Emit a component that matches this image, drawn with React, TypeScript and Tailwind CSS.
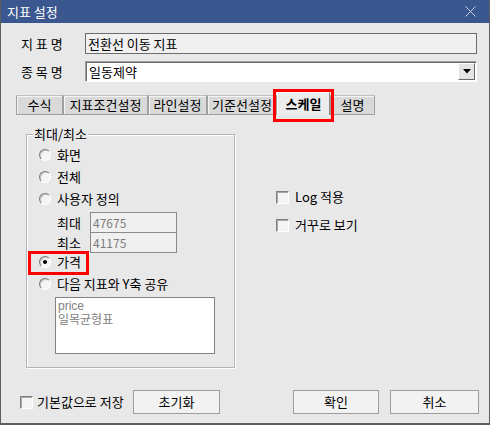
import React from 'react'

const font = { fontFamily: '"Noto Sans CJK KR", "Noto Sans", sans-serif' }

function Radio({ checked = false }: { checked?: boolean }) {
  return (
    <span className="flex h-[12px] w-[12px] shrink-0 items-center justify-center rounded-full border border-b-white border-l-[#7a7a7a] border-r-white border-t-[#7a7a7a] bg-[#f4f4f4] shadow-[inset_1px_1px_0_#c8c8c8]">
      {checked && <span className="h-[4px] w-[4px] rounded-full bg-black" />}
    </span>
  )
}

function Check() {
  return (
    <span className="h-[13px] w-[13px] shrink-0 border border-b-white border-l-[#808080] border-r-white border-t-[#808080] bg-[#f4f4f4] shadow-[inset_1px_1px_0_#a8a8a8]" />
  )
}

function Button({ label, w }: { label: string; w: string }) {
  return (
    <div className={`flex h-[24px] items-center justify-center border border-[#9c9c9c] bg-[#f2f2f2] text-black ${w}`}>
      {label}
    </div>
  )
}

const tabs = [
  { name: '수식', w: 'w-[47px]' },
  { name: '지표조건설정', w: 'w-[85px]' },
  { name: '라인설정', w: 'w-[59px]' },
  { name: '기준선설정', w: 'w-[70px]' },
  { name: '스케일', w: 'w-[53px]', active: true },
  { name: '설명', w: 'w-[45px]' },
]

export default function App() {
  return (
    <div className="h-[425px] w-[490px] overflow-hidden bg-white" style={font}>
      <div className="flex h-[425px] w-[490px] flex-col border-x border-b-2 border-[#5e5e5e] bg-[#e8e8e8] text-[13px] leading-[16px] text-black">
        <div className="flex h-[23px] shrink-0 items-center justify-between bg-[#3b5790] pl-[6px] pr-[13px] text-[13px] text-white">
          <span>지표 설정</span>
          <svg width="11" height="11" viewBox="0 0 11 11">
            <path d="M0.5 0.5 L10.5 10.5 M10.5 0.5 L0.5 10.5" stroke="#c9d2e4" strokeWidth="1" />
          </svg>
        </div>

        <div className="relative flex-1">
          {/* 지표명 */}
          <div className="mt-[10px] flex h-[21px] items-center">
            <span className="ml-[20px] w-[64px] whitespace-pre">지 표 명</span>
            <div className="flex h-[21px] w-[392px] items-center border border-[#6c6c6c] bg-[#f0f0f0] pl-[2px]">
              전환선 이동 지표
            </div>
          </div>

          {/* 종목명 */}
          <div className="mt-[7px] flex h-[21px] items-center">
            <span className="ml-[20px] w-[64px] whitespace-pre">종 목 명</span>
            <div className="flex h-[21px] w-[392px] items-center justify-between border border-b-white border-l-[#a0a0a0] border-r-white border-t-[#a0a0a0] bg-white pl-[3px] shadow-[inset_1px_1px_0_#696969]">
              <span>일동제약</span>
              <div className="mr-[1px] flex h-[17px] w-[17px] items-center justify-center border border-b-[#696969] border-l-white border-r-[#696969] border-t-white bg-[#e4e4e4]">
                <svg width="8" height="5" viewBox="0 0 8 5">
                  <path d="M0 0 H8 L4 4.5 Z" fill="#000" />
                </svg>
              </div>
            </div>
          </div>

          {/* tabs */}
          <div className="ml-[15px] mt-[10px] flex h-[23px] items-end">
            {tabs.map((t) =>
              t.active ? (
                <div
                  key={t.name}
                  className={`flex h-[23px] items-center justify-center border-l border-r border-t border-l-white border-r-[#8a8a8a] border-t-white bg-[#ececec] font-bold ${t.w}`}
                >
                  {t.name}
                </div>
              ) : (
                <div
                  key={t.name}
                  className={`flex h-[20px] items-center justify-center border-b border-l border-r border-t border-b-[#a0a0a0] border-l-[#a0a0a0] border-r-[#a0a0a0] border-t-[#c0c0c0] bg-[#d9d9d9] shadow-[inset_1px_1px_0_#f4f4f4] ${t.w}`}
                >
                  {t.name}
                </div>
              ),
            )}
          </div>

          <div className="pointer-events-none absolute left-[272px] top-[66px] h-[33px] w-[61px] border-[3px] border-[#ff0000]" />

          {/* panel */}
          <div className="mt-[19px] flex">
            <div className="relative ml-[25px] w-[209px] border border-[#b4b4b4] pb-[13px] pl-[12px] pt-[9px] shadow-[inset_1px_1px_0_#ffffff,1px_1px_0_#ffffff]">
              <span className="absolute left-[6px] top-[-9px] bg-[#e8e8e8] px-[1px] leading-[16px]">최대/최소</span>

              <div className="flex h-[22px] items-center gap-[6px]">
                <Radio />
                <span>화면</span>
              </div>
              <div className="flex h-[22px] items-center gap-[6px]">
                <Radio />
                <span>전체</span>
              </div>
              <div className="flex h-[22px] items-center gap-[6px]">
                <Radio />
                <span>사용자 정의</span>
              </div>
              <div className="ml-[18px] mt-[2px] flex h-[21px] items-center">
                <span className="w-[33px]">최대</span>
                <div className="flex h-[21px] w-[87px] items-center border border-[#8a8a8a] bg-[#f0f0f0] pl-[2px] text-[12px] text-[#7c7c7c]">
                  47675
                </div>
              </div>
              <div className="ml-[18px] flex h-[20px] items-center">
                <span className="w-[33px]">최소</span>
                <div className="flex h-[20px] w-[87px] items-center border border-t-0 border-[#8a8a8a] bg-[#f0f0f0] pl-[2px] text-[12px] text-[#7c7c7c]">
                  41175
                </div>
              </div>
              <div className="relative flex h-[18px] items-center gap-[6px]">
                <Radio checked />
                <span>가격</span>
                <div className="pointer-events-none absolute left-[-11px] top-[-2px] h-[24px] w-[61px] border-[3px] border-[#ff0000]" />
              </div>
              <div className="mt-[2px] flex h-[22px] items-center gap-[6px]">
                <Radio />
                <span>다음 지표와 Y축 공유</span>
              </div>
              <div className="ml-[16px] mt-[2px] h-[57px] w-[160px] border border-[#838383] bg-white pl-[2px] pt-[1px] font-['Liberation_Sans','Noto_Sans_CJK_KR',sans-serif] text-[12px] text-[#808080]">
                <div className="leading-[14px]">price</div>
                <div className="leading-[14px]">일목균형표</div>
              </div>
            </div>

            <div className="ml-[41px] mt-[55px] flex flex-col gap-[12px]">
              <div className="flex items-center gap-[6px]">
                <Check />
                <span>Log 적용</span>
              </div>
              <div className="flex items-center gap-[6px]">
                <Check />
                <span>거꾸로 보기</span>
              </div>
            </div>
          </div>

          {/* bottom */}
          <div className="mt-[22px] flex h-[24px] items-center">
            <div className="ml-[19px] flex w-[113px] items-center gap-[4px]">
              <Check />
              <span>기본값으로 저장</span>
            </div>
            <Button label="초기화" w="w-[87px]" />
            <div className="ml-[73px]">
              <Button label="확인" w="w-[86px]" />
            </div>
            <div className="ml-[11px]">
              <Button label="취소" w="w-[89px]" />
            </div>
          </div>
        </div>
      </div>
    </div>
  )
}
